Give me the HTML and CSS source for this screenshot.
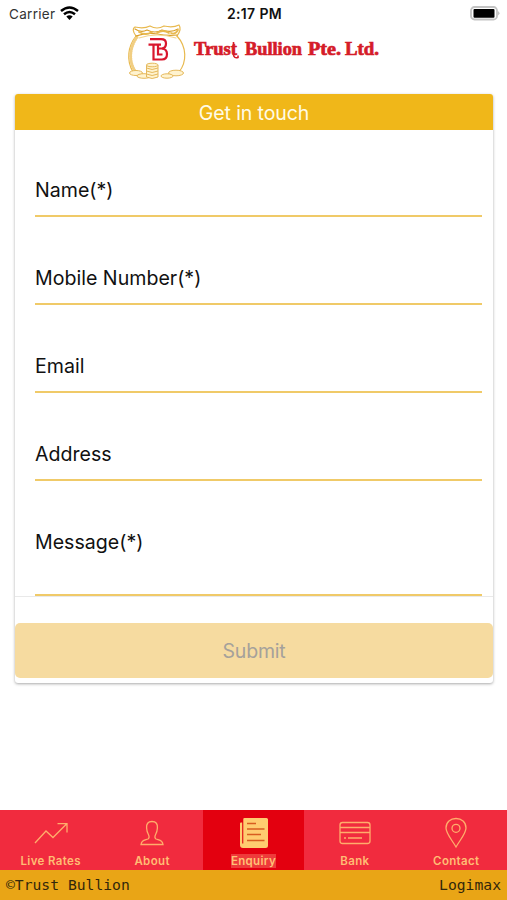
FILE: index.html
```html
<!DOCTYPE html>
<html lang="en">
<head>
<meta charset="utf-8">
<title>Trust Bullion</title>
<link rel="stylesheet" href="styles.css">
</head>
<body>
<div class="app">
  <div class="status">
    <div class="carrier"><span>Carrier</span>
      <svg width="19" height="14" viewBox="0 0 19 14"><g fill="none" stroke="#000" stroke-width="2.500"><path d="M1 5Q9.500-2 18 5"/><path d="M4 8.300Q9.500 3.700 15 8.300"/></g><path d="M6.300 10.600Q9.500 8 12.700 10.600L9.500 14Z"/></svg>
    </div>
    <div class="time">2:17 PM</div>
    <div class="battery"><svg width="31" height="15" viewBox="0 0 31 15"><rect x="2" y="1" width="26" height="12.500" rx="3.500" fill="#fff" stroke="#c3c3c3" stroke-width="1.800"/><rect x="4.500" y="3" width="21" height="8.800" rx="1"/><path d="M29.300 5Q31.500 7.300 29.300 9.500Z" fill="#aaa"/></svg></div>
  </div>
  <header class="brand">
    <svg width="62" height="58" viewBox="0 0 62 58">
      <g fill="none" stroke="#e8b94e" stroke-width="1.200" stroke-linecap="round">
        <path d="M9 12C1 22-1 36 6 48M50 12C60 23 60 38 52 48"/>
        <path d="M10 13C3 23 1 36 8 47" stroke-width="3" stroke-dasharray="1 1.500" stroke="#f1ce82"/>
        <path d="M9 12Q4 5 8 3Q17 5 23 2Q30 6 37 2Q46 4 52 1Q55 5 50 12"/>
        <path d="M8 5Q14 9 20 6Q28 10 35 6Q44 9 51 5M9 12Q20 8 30 10Q40 12 50 11" stroke="#d99f2a"/>
        <path d="M12 8Q19 12 25 8M30 9Q36 5 42 9M44 9Q48 11 51 6" stroke-width="1.800"/>
        <path d="M12 14Q30 8 49 14" stroke="#f3d590"/>
      </g>
      <g fill="#fff3cf" stroke="#e5b85b" stroke-width="1">
        <ellipse cx="9" cy="49" rx="6.500" ry="2.500"/><ellipse cx="17" cy="52" rx="7" ry="2.300"/>
        <ellipse cx="49" cy="49" rx="7.500" ry="2.800"/><ellipse cx="40" cy="52" rx="6" ry="2.200"/>
        <path d="M19.500 41V53Q25 56 31 53V41"/><path d="M19.500 44Q25 47 31 44M19.500 47Q25 50 31 47M19.500 50Q25 53 31 50"/><ellipse cx="25.200" cy="41" rx="5.800" ry="1.800"/>
      </g>
      <g fill="none" stroke="#d9162d" stroke-width="2.200">
        <path d="M23 15.200H34Q39 15.200 39 19.500Q39 24 35 24.500H31"/>
        <path d="M35 24.500Q40 25 40 30Q40 35.500 35 35.500H26.500V21.500M21.500 20.700H34"/>
        <path d="M31 21V30.500H35.500"/>
      </g>
    </svg>
    <svg class="wordmark" width="188" height="28" viewBox="0 0 188 28">
      <g class="wordmark-text"><text x="1" y="19.500" textLength="43" lengthAdjust="spacingAndGlyphs">Trust</text><text x="52" y="19.500" textLength="57" lengthAdjust="spacingAndGlyphs">Bullion</text><text x="115" y="19.500" textLength="33" lengthAdjust="spacingAndGlyphs">Pte.</text><text x="152" y="19.500" textLength="34" lengthAdjust="spacingAndGlyphs">Ltd.</text></g>
      <path d="M40.500 7V20Q41 23.500 45 22.500V20.500" fill="none" stroke="#d51c29" stroke-width="1.600"/>
    </svg>
  </header>
  <main class="card">
    <h1>Get in touch</h1>
    <div class="field first">Name(*)</div>
    <div class="field">Mobile Number(*)</div>
    <div class="field">Email</div>
    <div class="field">Address</div>
    <div class="field message">Message(*)</div>
    <div class="actions"><button disabled>Submit</button></div>
  </main>
  <nav class="tabs">
    <div class="tab"><svg width="36" height="34" viewBox="0 0 36 34"><path d="M2 26L13 14L20 20.500L33.500 7M24.500 6.700H34V15.500"/></svg><span>Live Rates</span></div>
    <div class="tab"><svg width="36" height="34" viewBox="0 0 36 34"><path d="M18 4.500C13.800 4.500 12.300 7 12.600 11C12.800 14 13 15 14.200 17C15.500 19.500 15.500 21 14 22C10 23.500 7.500 23.500 7 27.500H29C28.500 23.500 26 23.500 22 22C20.500 21 20.500 19.500 21.800 17C23 15 23.200 14 23.400 11C23.700 7 22.200 4.500 18 4.500Z"/></svg><span>About</span></div>
    <div class="tab active"><svg width="36" height="34" viewBox="0 0 36 34"><path class="solid" d="M9.500 1H31.500Q33 1 33 2.500V28.500Q33 31 30.500 31H8Q5 31 5 28V6.500Q5 5.500 6 5.500H7.200V26.500H8.300V2Q8.300 1 9.500 1Z"/><path class="rules" d="M12 6.500H21M12 12H29.500M12 17.500H26M12 23.500H29.500"/></svg><span>Enquiry</span></div>
    <div class="tab"><svg width="36" height="34" viewBox="0 0 36 34"><rect x="3" y="5.500" width="30" height="21" rx="2.500"/><path d="M3 10.500H33M3 15.500H33M7 21H9M11 21H25"/></svg><span>Bank</span></div>
    <div class="tab"><svg width="36" height="34" viewBox="0 0 36 34"><path d="M18 30C14 23 8 16.500 8 11C8 5 12.500 1.500 18 1.500S28 5 28 11C28 16.500 22 23 18 30Z"/><circle cx="18" cy="11.300" r="4"/></svg><span>Contact</span></div>
  </nav>
  <footer><span>©Trust Bullion</span><span>Logimax</span></footer>
</div>
</body>
</html>
```
FILE: styles.css
```css
* { box-sizing: border-box; }
body { margin: 0; background: #fff; font-family: Inter, "Liberation Sans", sans-serif; color: #111; }
.app { width: 507px; height: 900px; display: flex; flex-direction: column; overflow: hidden; }
svg { display: block; flex: none; }
.status { height: 24px; flex: none; padding: 3px 7px 0 9px; display: grid; grid-template-columns: 1fr auto 1fr; font-size: 13.500px; line-height: 22px; }
.carrier { display: flex; gap: 5px; letter-spacing: 0.300px; color: #333; }
.carrier svg { margin-top: 3px; }
.time { font-weight: 600; font-size: 14px; letter-spacing: 0.350px; }
.battery { justify-self: end; margin-top: 3px; }
.brand { height: 70px; flex: none; padding-left: 127px; display: flex; gap: 4px; }
.wordmark { margin-top: 11px; }
.wordmark-text { font-family: "Liberation Serif", serif; font-size: 18.500px; font-weight: 700; fill: #d51c29; stroke: #d51c29; stroke-width: 0.700px; }
.card { width: 478px; height: 589px; flex: none; margin-left: 15px; border-radius: 3px; box-shadow: 0 1px 3px rgba(0,0,0,.34); display: flex; flex-direction: column; }
h1 { margin: 0; height: 36px; flex: none; background: #f0b719; border-radius: 3px 3px 0 0; color: #fffbe8; font-size: 19.500px; font-weight: 400; line-height: 38px; letter-spacing: -0.100px; text-align: center; }
.field { height: 88px; flex: none; margin: 0 11px 0 20px; border-bottom: 2px solid #f0ca68; padding-top: 47px; font-size: 19.600px; line-height: 28px; }
.field.first { height: 87px; padding-top: 46px; }
.field.message { height: 115px; }
.actions { border-top: 1px solid #e9e9e9; padding-top: 26px; }
button { display: block; width: 100%; height: 55px; border: 0; border-radius: 5px; background: #f6dba0; color: #a5a19b; font: 400 19.500px/53px Inter, "Liberation Sans", sans-serif; letter-spacing: -0.200px; padding: 2px 0 0; }
.tabs { height: 60px; flex: none; margin-top: auto; display: grid; grid-template-columns: repeat(5, 1fr); background: #f12b3e; color: #ffbd74; }
.tab { display: flex; flex-direction: column; align-items: center; padding-top: 7px; font-size: 11.500px; font-weight: 600; line-height: 14px; letter-spacing: 0.350px; }
.tab svg { fill: none; stroke: #ffad6b; stroke-width: 1.300px; }
.tab span { margin-top: 3px; }
.active { background: #e3000f; }
.active .solid { fill: #ffcc70; stroke: none; }
.active .rules { stroke: #d85d20; stroke-width: 1.500px; }
.active span { background: #ee3b3b; color: #ffc276; }
footer { height: 30px; flex: none; background: #e9a516; color: #32270b; padding: 0 6px; display: flex; justify-content: space-between; font: 14.700px/30px "DejaVu Sans Mono", monospace; }
```
